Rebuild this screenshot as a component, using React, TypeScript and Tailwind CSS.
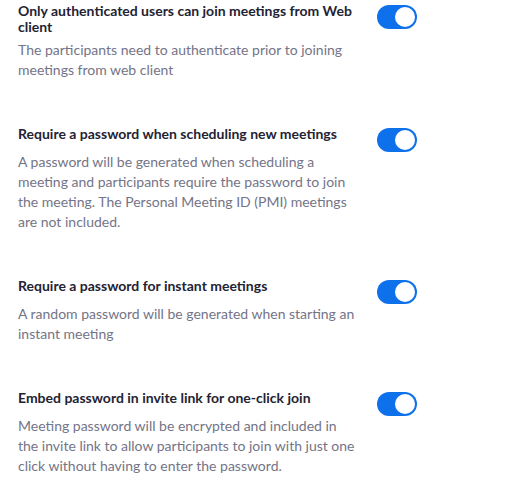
import { useState } from "react";

type Setting = {
  id: string;
  title: string;
  description: string;
};

const SETTINGS: Setting[] = [
  {
    id: "auth-web",
    title: "Only authenticated users can join meetings from Web client",
    description: "The participants need to authenticate prior to joining meetings from web client",
  },
  {
    id: "pwd-scheduled",
    title: "Require a password when scheduling new meetings",
    description:
      "A password will be generated when scheduling a meeting and participants require the password to join the meeting. The Personal Meeting ID (PMI) meetings are not included.",
  },
  {
    id: "pwd-instant",
    title: "Require a password for instant meetings",
    description: "A random password will be generated when starting an instant meeting",
  },
  {
    id: "pwd-embed",
    title: "Embed password in invite link for one-click join",
    description:
      "Meeting password will be encrypted and included in the invite link to allow participants to join with just one click without having to enter the password.",
  },
];

function Toggle({ on, onChange }: { on: boolean; onChange: () => void }) {
  return (
    <button
      type="button"
      role="switch"
      aria-checked={on}
      onClick={onChange}
      className={`relative mt-[2px] h-[24px] w-[40px] shrink-0 rounded-full transition-colors ${
        on ? "bg-[#0e71eb]" : "bg-[#babacc]"
      }`}
    >
      <span
        className={`absolute top-[2px] h-[20px] w-[20px] rounded-full bg-white transition-all ${
          on ? "left-[18px]" : "left-[2px]"
        }`}
      />
    </button>
  );
}

export default function App() {
  const [values, setValues] = useState<Record<string, boolean>>({
    "auth-web": true,
    "pwd-scheduled": true,
    "pwd-instant": true,
    "pwd-embed": true,
  });

  return (
    <div
      className="min-h-screen bg-white pl-[18px] pt-[3px]"
      style={{ fontFamily: "Lato, 'Open Sans', sans-serif" }}
    >
      <div className="flex flex-col gap-[46px]">
        {SETTINGS.map((s) => (
          <div key={s.id} className="flex items-start gap-[20px]">
            <div className="w-[339px]">
              <div className="min-h-[21px] text-[14px] leading-[16px] font-bold text-[#232333]">
                {s.title}
              </div>
              <p className="mt-[5px] text-[14px] leading-[20px] text-[#747487]">{s.description}</p>
            </div>
            <Toggle
              on={values[s.id]}
              onChange={() => setValues((v) => ({ ...v, [s.id]: !v[s.id] }))}
            />
          </div>
        ))}
      </div>
    </div>
  );
}
